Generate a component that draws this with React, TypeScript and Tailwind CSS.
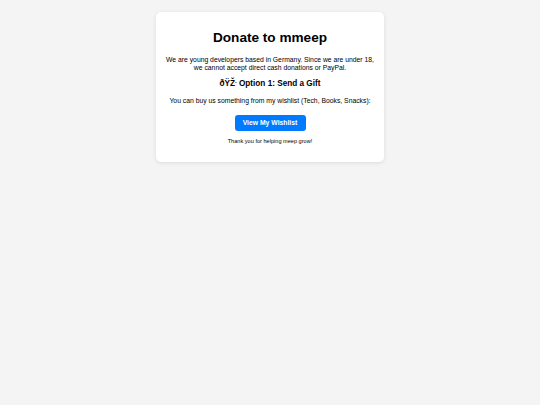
export default function App() {
  return (
    <div
      className="min-h-[405px] w-full bg-[#f4f4f4] pt-[12px] text-black"
      style={{ fontFamily: '"Liberation Sans", Arial, sans-serif' }}
    >
      <div className="mx-auto w-[228px] rounded-[5px] bg-white px-[10px] pt-[17px] pb-[17px] text-center shadow-[0_1px_4px_rgba(0,0,0,0.1)]">
        <h1 className="text-[13.6px] font-bold leading-[17px]">Donate to mmeep</h1>
        <p className="mt-[10px] text-[6.8px] leading-[8px]">
          We are young developers based in Germany. Since we are under 18, we cannot accept direct cash donations or
          PayPal.
        </p>
        <h3 className="mt-[7px] text-[8.2px] font-bold leading-[10px]">
          ðŸŽ<span className="text-[5px] align-top">˜</span> Option 1: Send a Gift
        </h3>
        <p className="mt-[8px] text-[6.8px] leading-[8px]">
          You can buy us something from my wishlist (Tech, Books, Snacks):
        </p>
        <div className="mt-[10px] flex justify-center">
          <a className="flex h-[16px] w-[71px] items-center justify-center rounded-[3px] bg-[#007bff] text-[6.8px] font-bold text-white">
            View My Wishlist
          </a>
        </div>
        <p className="mt-[7px] text-[5.6px] leading-[7px]">Thank you for helping meep grow!</p>
      </div>
    </div>
  );
}
